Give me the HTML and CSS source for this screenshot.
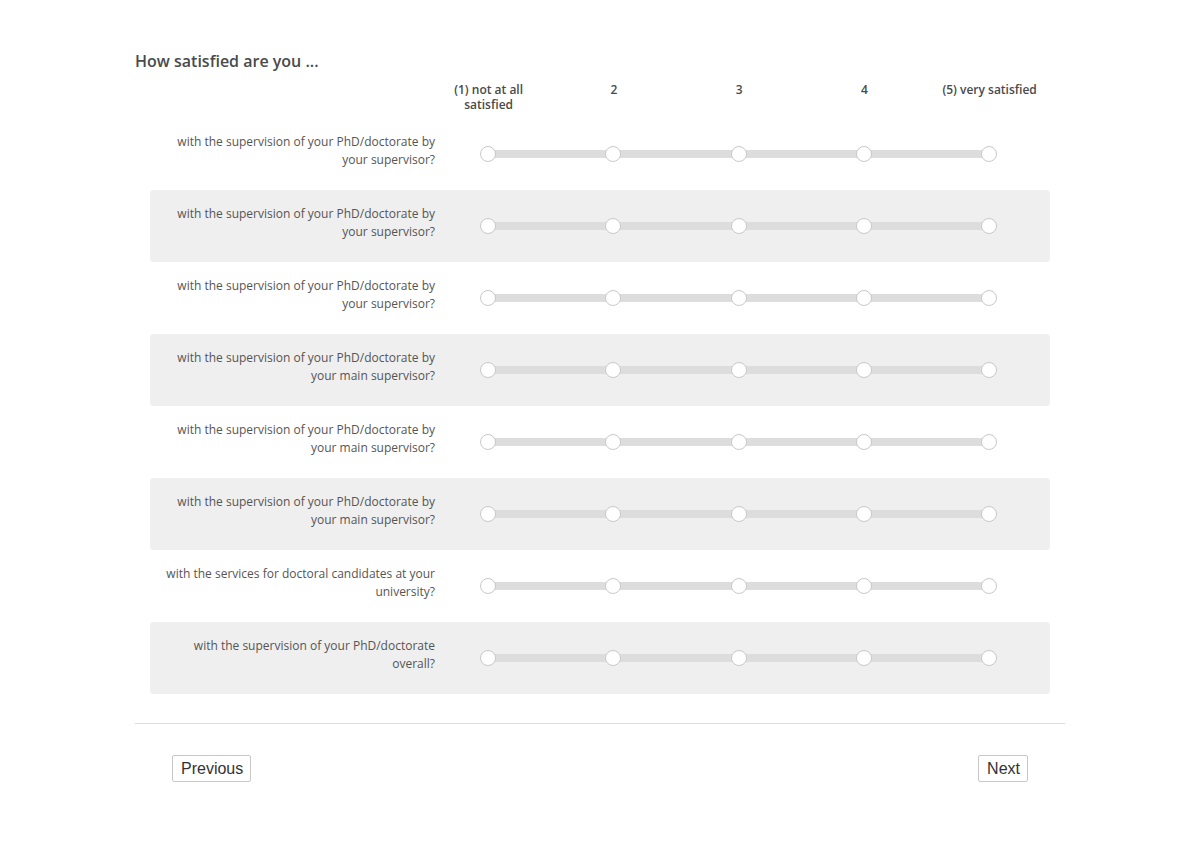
FILE: index.html
```html
<!DOCTYPE html>
<html lang="en">
<head>
<meta charset="utf-8">
<title>Survey</title>
<link rel="stylesheet" href="styles.css">
</head>
<body>
<div class="page">
  <h2 class="question">How satisfied are you ...</h2>
  <div class="scale-head">
    <div class="head-cell">(1) not at all satisfied</div>
    <div class="head-cell">2</div>
    <div class="head-cell">3</div>
    <div class="head-cell">4</div>
    <div class="head-cell">(5) very satisfied</div>
  </div>
  <div class="rows">
    <div class="row">
      <div class="label">with the supervision of your PhD/doctorate by your supervisor?</div>
      <div class="slider"><div class="track"><span class="dot"></span><span class="dot"></span><span class="dot"></span><span class="dot"></span><span class="dot"></span></div></div>
    </div>
    <div class="row alt">
      <div class="label">with the supervision of your PhD/doctorate by your supervisor?</div>
      <div class="slider"><div class="track"><span class="dot"></span><span class="dot"></span><span class="dot"></span><span class="dot"></span><span class="dot"></span></div></div>
    </div>
    <div class="row">
      <div class="label">with the supervision of your PhD/doctorate by your supervisor?</div>
      <div class="slider"><div class="track"><span class="dot"></span><span class="dot"></span><span class="dot"></span><span class="dot"></span><span class="dot"></span></div></div>
    </div>
    <div class="row alt">
      <div class="label">with the supervision of your PhD/doctorate by your main supervisor?</div>
      <div class="slider"><div class="track"><span class="dot"></span><span class="dot"></span><span class="dot"></span><span class="dot"></span><span class="dot"></span></div></div>
    </div>
    <div class="row">
      <div class="label">with the supervision of your PhD/doctorate by your main supervisor?</div>
      <div class="slider"><div class="track"><span class="dot"></span><span class="dot"></span><span class="dot"></span><span class="dot"></span><span class="dot"></span></div></div>
    </div>
    <div class="row alt">
      <div class="label">with the supervision of your PhD/doctorate by your main supervisor?</div>
      <div class="slider"><div class="track"><span class="dot"></span><span class="dot"></span><span class="dot"></span><span class="dot"></span><span class="dot"></span></div></div>
    </div>
    <div class="row">
      <div class="label">with the services for doctoral candidates at your university?</div>
      <div class="slider"><div class="track"><span class="dot"></span><span class="dot"></span><span class="dot"></span><span class="dot"></span><span class="dot"></span></div></div>
    </div>
    <div class="row alt">
      <div class="label">with the supervision of your PhD/doctorate overall?</div>
      <div class="slider"><div class="track"><span class="dot"></span><span class="dot"></span><span class="dot"></span><span class="dot"></span><span class="dot"></span></div></div>
    </div>
  </div>
  <div class="nav">
    <button class="btn">Previous</button>
    <button class="btn">Next</button>
  </div>
</div>
</body>
</html>
```

FILE: styles.css
```css
html, body {
  margin: 0;
  padding: 0;
  background: #fff;
}
body {
  font-family: "Open Sans", "Noto Sans", sans-serif;
  color: #555;
}
.page {
  width: 930px;
  margin: 0 0 0 135px;
  padding-top: 50px;
}
.question {
  margin: 0;
  font-size: 16px;
  line-height: 22px;
  font-weight: 600;
  color: #4a4a4a;
}
.scale-head {
  display: flex;
  padding-left: 291px;
  margin-top: 10px;
  height: 36px;
}
.head-cell {
  width: 125.25px;
  text-align: center;
  font-size: 12px;
  line-height: 15px;
  font-weight: 600;
  color: #4a4a4a;
  padding: 0 27px;
  box-sizing: border-box;
}
.head-cell:last-child {
  padding: 0 10px;
}
.rows {
  margin: 0 15px;
}
.row {
  display: flex;
  align-items: flex-start;
  height: 72px;
  box-sizing: border-box;
  padding-top: 15px;
  border-radius: 4px;
}
.row.alt {
  background: #efefef;
}
.label {
  padding: 0 15px;
  box-sizing: border-box;
  width: 300px;
  text-align: right;
  font-size: 12px;
  line-height: 18px;
  color: #555;
}
.slider {
  padding-left: 30px;
  padding-top: 13px;
}
.track {
  position: relative;
  display: flex;
  justify-content: space-between;
  width: 517px;
}
.track::before {
  content: "";
  position: absolute;
  left: 8px;
  right: 8px;
  top: 4px;
  height: 8px;
  background: #dddddd;
}
.dot {
  position: relative;
  width: 16px;
  height: 16px;
  box-sizing: border-box;
  border-radius: 50%;
  background: #fff;
  border: 1px solid #c9c9c9;
}
.nav {
  margin-top: 29px;
  border-top: 1px solid #dddddd;
  display: flex;
  justify-content: space-between;
  padding: 31px 37px 0 37px;
}
.btn {
  font-family: "Liberation Sans", Arial, sans-serif;
  font-size: 16px;
  line-height: 18px;
  color: #333;
  background: #fff;
  border: 1px solid #c8c8c8;
  border-radius: 2px;
  padding: 4px 7px 3px 8px;
  margin: 0;
}
```
